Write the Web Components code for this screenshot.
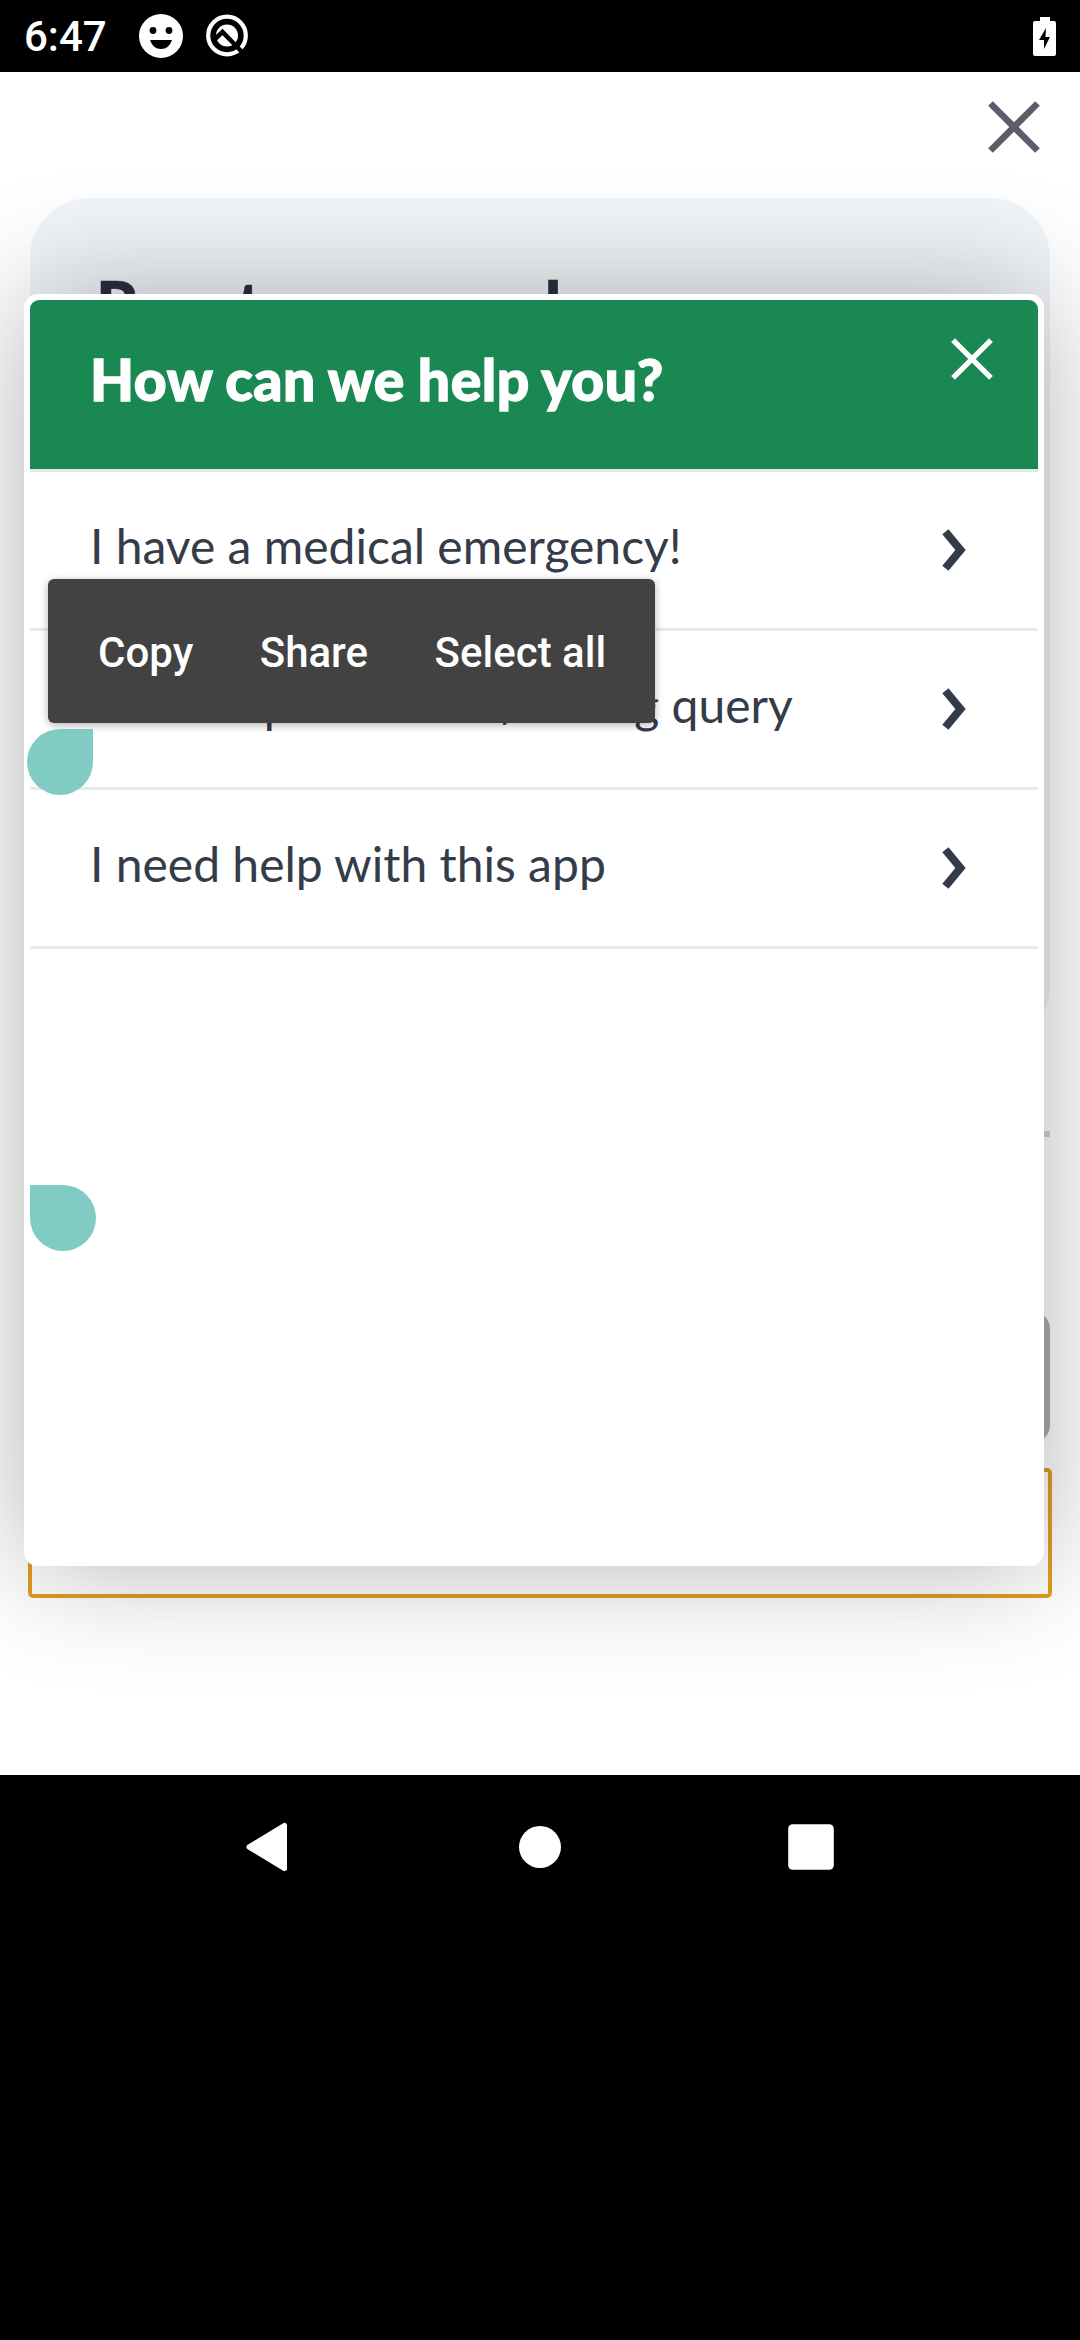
<!DOCTYPE html>
<html lang="en">
<head>
<meta charset="utf-8">
<title>How can we help you?</title>
<style>
html,body{margin:0;padding:0;background:#000}
body{width:1080px;height:2340px;overflow:hidden}
</style>
</head>
<body>
<phone-screen></phone-screen>
<script>
function define(name, html){
  customElements.define(name, class extends HTMLElement{
    constructor(){
      super();
      const t=document.createElement('template');
      t.innerHTML=html;
      this.attachShadow({mode:'open'}).appendChild(t.content.cloneNode(true));
    }
  });
}

define('status-bar', `<style>
:host{display:flex;height:72px;background:#000;color:#fff;font:500 42px/72px Roboto,sans-serif;align-items:center;padding:0 24px;box-sizing:border-box}
.t{width:115px;white-space:nowrap;padding-top:2px}
svg{display:block}
.s{flex:1}
</style>
<div class="t">6:47</div>
<svg width="44" height="44" viewBox="0 0 44 44"><circle cx="22" cy="22" r="22" fill="#fff"/><circle cx="14" cy="16.5" r="3.4"/><circle cx="30" cy="16.5" r="3.4"/><path d="M11 26H33Q30 35 22 35T11 26Z"/></svg>
<svg width="44" height="44" viewBox="0 0 44 44" style="margin-left:22px"><circle cx="22" cy="21.500" r="18.800" fill="none" stroke="#fff" stroke-width="4.200"/><circle cx="22" cy="21.500" r="11" fill="#fff"/><path d="M10 25L17.500 18L38 39" fill="none" stroke="#000" stroke-width="4.500"/></svg>
<div class="s"></div>
<svg width="23" height="39" viewBox="0 0 23 39"><path d="M7 0H17V4H21Q23 4 23 6V37Q23 39 21 39H2Q0 39 0 37V6Q0 4 2 4H7Z" fill="#fff"/><path d="M13 11L6 23H11V32L17 20H12.500Z"/></svg>`);

define('close-icon', `<style>:host{display:block}svg{display:block;width:100%;height:100%}</style>
<svg viewBox="0 0 52 52"><path d="M2.500 2.500L49.500 49.500M49.500 2.500L2.500 49.500" fill="none" stroke="currentColor" stroke-width="6.6"/></svg>`);

define('app-page', `<style>
:host{display:flex;flex-direction:column;height:1703px;background:#fff;box-sizing:border-box;overflow:hidden}
.top{display:flex;justify-content:flex-end;padding:29px 40px 0 0;height:126px;box-sizing:border-box;color:#5b5e6a}
close-icon{width:52px;height:52px}
.card{margin:0 30px;height:848px;flex:none;border-radius:60px;background:#f0f5f9;box-sizing:border-box;padding:67px 64px 0 66px;font:900 66px/79px Lato,sans-serif;letter-spacing:.15px;-webkit-text-stroke:.6px currentColor;color:#2b3040}
.rule{height:6px;flex:none;margin:85px 30px 0;background:#d4d4d6}
.btn{height:132px;flex:none;margin:174px 30px 0;border-radius:18px;background:#adaeb4}
.focus{height:130px;flex:none;margin:25px 28px 0;border:4px solid #df9f22;border-radius:5px;box-sizing:border-box}
</style>
<div class="top"><close-icon></close-icon></div>
<div class="card">Reset password</div>
<div class="rule"></div><div class="btn"></div><div class="focus"></div>`);

define('help-row', `<style>
:host{display:flex;justify-content:space-between;align-items:center;height:159px;box-sizing:border-box;border-bottom:3px solid #e9e9ea;padding:0 72px 0 60px;font:400 48px/60px Lato,sans-serif;color:#343b49}
span{white-space:pre;margin-bottom:8px}
svg{display:block}
</style><span><slot></slot></span>
<svg width="24" height="42" viewBox="0 0 24 42"><path d="M3.400 2.700L18.500 21L3.400 39.300" fill="none" stroke="#333b49" stroke-width="8"/></svg>`);

define('help-dialog', `<style>
:host{display:flex;flex-direction:column;box-sizing:border-box;border:6px solid #fff;border-radius:14px;background:#fff;box-shadow:0 0 120px rgba(0,0,0,.3)}
header{display:flex;justify-content:space-between;height:172px;box-sizing:border-box;background:#1a8852;border-bottom:3px solid #e3eae6;border-radius:9px 9px 0 0;color:#fff;font:900 57px/70px "Lato Black",Lato,sans-serif;padding:44px 45px 0 60px;flex:none}
header span{letter-spacing:.55px;word-spacing:-1.2px;-webkit-text-stroke:1.3px currentColor}
close-icon{width:42px;height:42px;margin-top:-6px}
</style><header><span>How can we help you?</span><close-icon></close-icon></header><slot></slot>`);

define('text-toolbar', `<style>
:host{display:flex;align-items:center;box-sizing:border-box;background:#424242;border-radius:6px;box-shadow:0 2px 8px rgba(0,0,0,.3);color:#fff;font:500 42px/50px Roboto,sans-serif;padding:4px 0 0 50px;gap:66.500px;white-space:nowrap}
</style><span>Copy</span><span>Share</span><span>Select all</span>`);

define('nav-bar', `<style>
:host{display:flex;height:144px;background:#000;justify-content:space-around;align-items:center;padding:0 134px}
svg{display:block}
</style>
<svg width="50" height="50" viewBox="0 0 50 50"><path d="M5 25L40.500 3.500V46.500Z" fill="#fff" stroke="#fff" stroke-width="5" stroke-linejoin="round"/></svg>
<svg width="50" height="50" viewBox="0 0 50 50"><circle cx="25" cy="25" r="21" fill="#fff"/></svg>
<svg width="50" height="50" viewBox="0 0 50 50"><rect x="2.200" y="2.200" width="45.600" height="45.600" rx="4.500" fill="#fff"/></svg>`);

define('phone-screen', `<style>
:host{display:block;position:relative;width:1080px;height:2340px;background:#000;overflow:hidden}
.view{position:relative;overflow:hidden}
help-dialog{position:absolute;left:24px;top:222px;width:1020px;height:1272px}
text-toolbar{position:absolute;left:48px;top:507px;width:607px;height:144px}
.lead{display:inline-block;width:411px}
.h{position:absolute;width:66px;height:66px;background:#80cbc4;border-radius:50%}
.a{left:27px;top:657px;border-top-right-radius:0}
.b{left:30px;top:1113px;border-top-left-radius:0}
</style>
<status-bar></status-bar>
<div class="view">
<app-page></app-page>
<help-dialog><help-row>I have a medical emergency!</help-row><help-row><span class="lead">I have a procedure</span>/ billing query</help-row><help-row>I need help with this app</help-row></help-dialog>
<text-toolbar></text-toolbar>
<div class="h a"></div><div class="h b"></div>
</div>
<nav-bar></nav-bar>`);
</script>
</body>
</html>
